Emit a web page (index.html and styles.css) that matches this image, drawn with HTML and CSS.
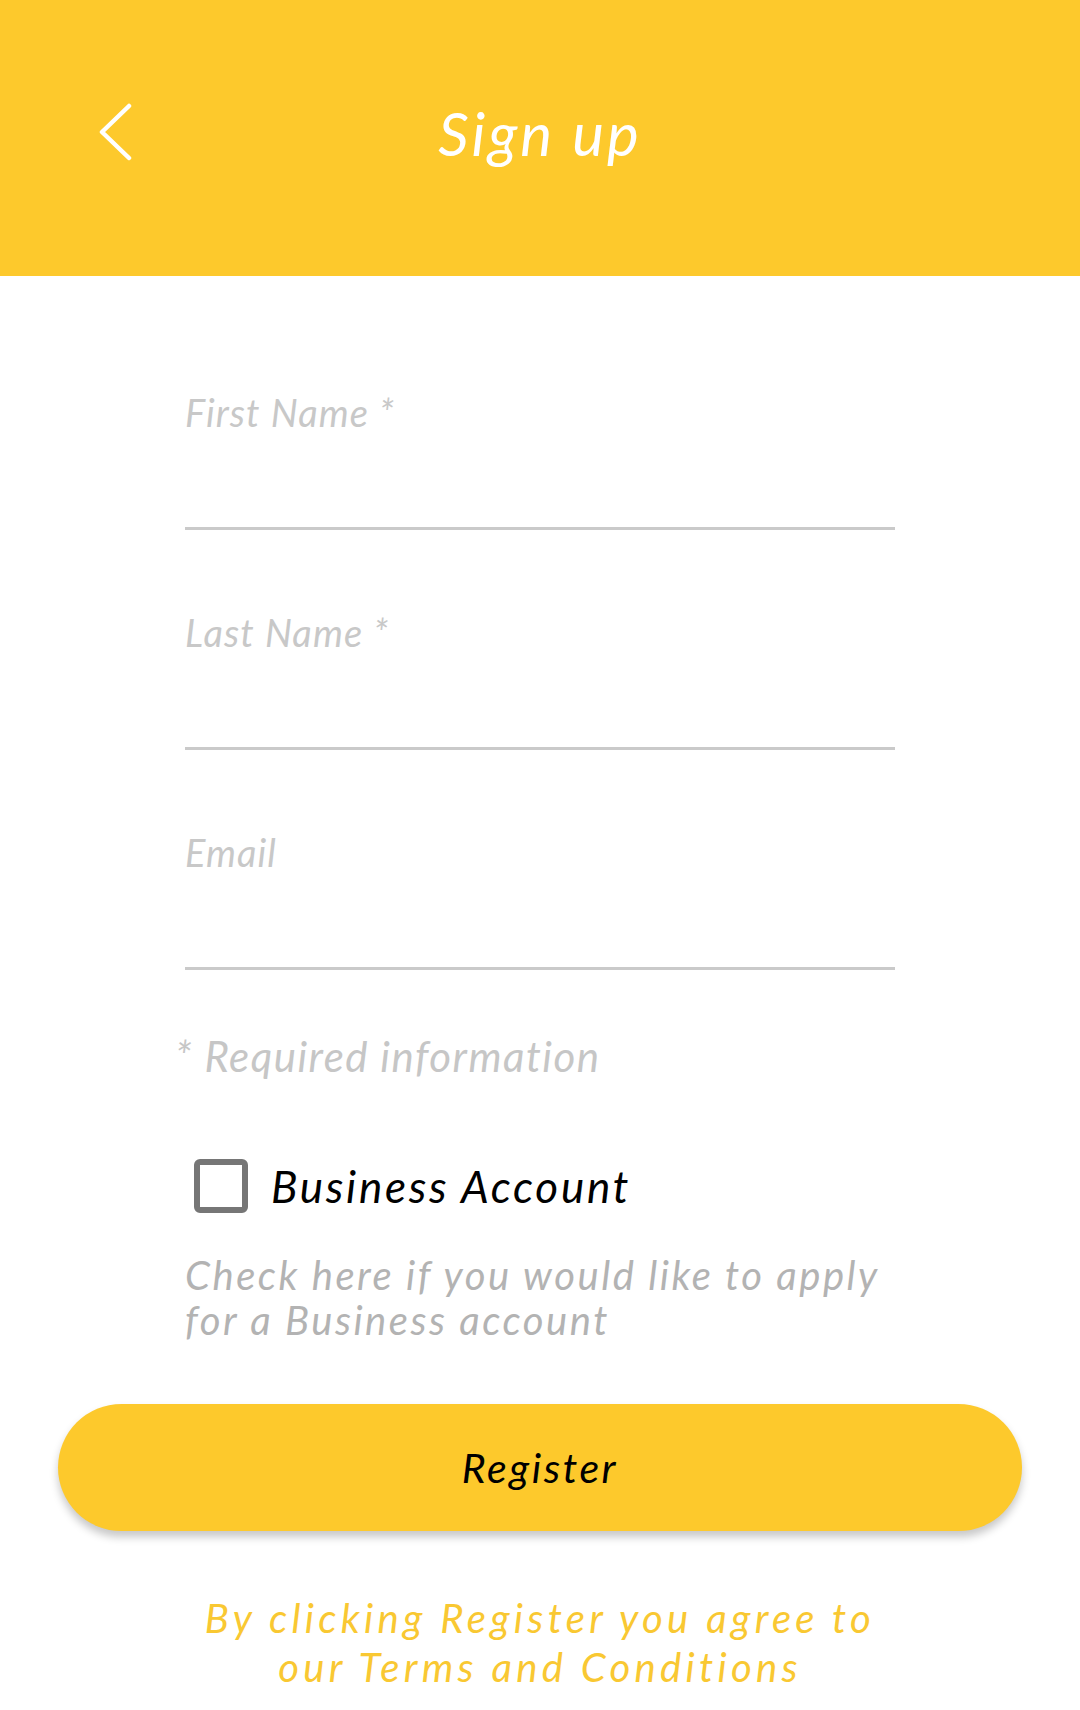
FILE: index.html
```html
<!DOCTYPE html>
<html lang="en">
<head>
<meta charset="utf-8">
<title>Sign up</title>
<link rel="stylesheet" href="styles.css">
</head>
<body>
<header class="topbar">
  <a class="back" href="#" aria-label="Back">
    <svg width="40" height="60" viewBox="0 0 40 60"><path d="M33 3 L6 29 L33 55" fill="none" stroke="#fff" stroke-width="4.5" stroke-linecap="round" stroke-linejoin="round"/></svg>
  </a>
  <h1 class="title">Sign up</h1>
  <span class="spacer"></span>
</header>
<main class="content">
  <form class="form">
    <div class="field"><span class="field-label">First Name *</span></div>
    <div class="field"><span class="field-label">Last Name *</span></div>
    <div class="field"><span class="field-label">Email</span></div>
    <p class="note">* Required information</p>
    <label class="check-row">
      <span class="checkbox"></span>
      <span class="check-label">Business Account</span>
    </label>
    <p class="hint">Check here if you would like to apply<br>for a Business account</p>
  </form>
  <div class="actions">
    <button class="register" type="button">Register</button>
  </div>
  <p class="terms">By clicking Register you agree to<br>our Terms and Conditions</p>
</main>
</body>
</html>
```
FILE: styles.css
```css
* { box-sizing: border-box; }
html, body { margin: 0; padding: 0; }
body {
  width: 1080px;
  height: 1710px;
  overflow: hidden;
  background: #ffffff;
  font-family: "Lato", "Open Sans", sans-serif;
  font-style: italic;
}
.topbar {
  height: 276px;
  background: #fdc92c;
  display: grid;
  grid-template-columns: 1fr auto 1fr;
  align-items: center;
  padding-bottom: 10px;
}
.back {
  margin-left: 96px;
  display: block;
  width: 40px;
  height: 60px;
}
.back svg { display: block; }
.title {
  margin: 0;
  color: #ffffff;
  font-size: 60px;
  font-weight: 400;
  line-height: 70px;
  letter-spacing: 3px;
}
.content { padding-top: 34px; }
.form { padding: 0 185px; margin: 0; }
.field {
  height: 220px;
  padding-top: 80px;
  border-bottom: 3px solid #cacaca;
}
.field-label {
  display: block;
  font-size: 38px;
  line-height: 44px;
  letter-spacing: 1.1px;
  color: #c8c8c8;
}
.note {
  margin: 61px 0 0 -10px;
  font-size: 42px;
  line-height: 50px;
  letter-spacing: 1.5px;
  color: #c6c6c6;
}
.check-row {
  display: flex;
  align-items: center;
  gap: 23px;
  margin: 78px 0 0 9px;
}
.checkbox {
  width: 54px;
  height: 54px;
  border: 6px solid #767676;
  border-radius: 6px;
  flex: none;
}
.check-label {
  font-size: 44px;
  line-height: 54px;
  letter-spacing: 2.7px;
  color: #000000;
}
.hint {
  margin: 40px 0 0 0;
  font-size: 40px;
  line-height: 45px;
  letter-spacing: 2.5px;
  color: #b3b3b3;
  white-space: nowrap;
}
.actions {
  padding: 0 58px;
  margin-top: 61px;
}
.register {
  display: flex;
  align-items: center;
  justify-content: center;
  width: 100%;
  height: 127px;
  border: none;
  border-radius: 64px;
  background: #fdc92c;
  box-shadow: 0 6px 8px rgba(0, 0, 0, 0.22);
  font-family: inherit;
  font-style: italic;
  font-size: 41px;
  letter-spacing: 2.6px;
  color: #000000;
  padding: 0;
}
.terms {
  margin: 63px 0 0 0;
  text-align: center;
  font-size: 40px;
  line-height: 49px;
  letter-spacing: 4.3px;
  color: #f9c832;
}
```
